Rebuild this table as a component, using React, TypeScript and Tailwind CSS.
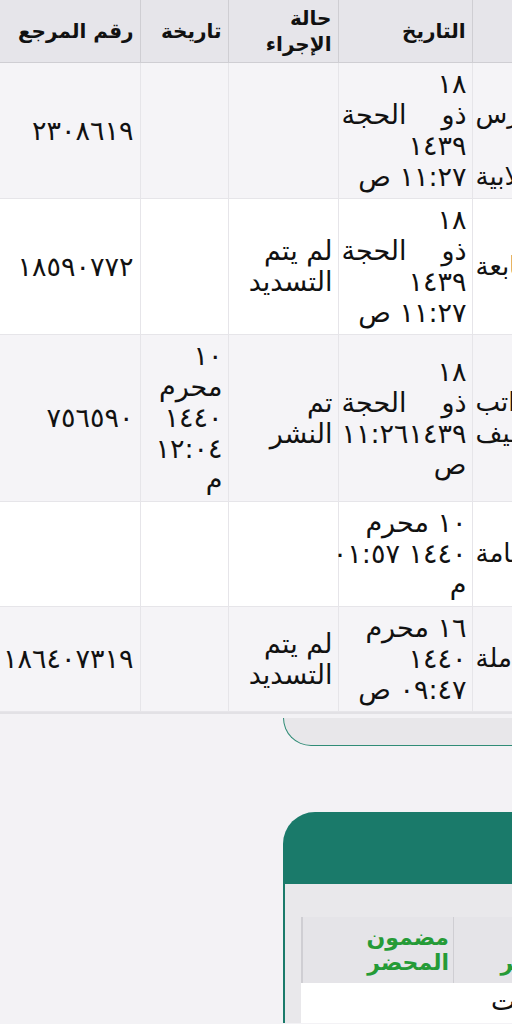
import React from 'react'

// one row of the transactions table; every cell is a list of display lines
type Row = {
  bg: string
  ref: string
  issued: string[]
  status: string[]
  date: string[]
  side: [string, boolean][]
}

const rows: Row[] = [
  {
    bg: 'bg-[#f5f4f7]',
    ref: '٢٣٠٨٦١٩',
    issued: [],
    status: [],
    date: ['١٨', 'ذو|الحجة', '١٤٣٩', '١١:٢٧ ص'],
    side: [['إدارة', false], ['شؤون المدارس', true], ['الأهلية', false], ['والخدمات الطلابية', true]],
  },
  {
    bg: 'bg-white',
    ref: '١٨٥٩٠٧٧٢',
    issued: [],
    status: ['لم يتم', 'التسديد'],
    date: ['١٨', 'ذو|الحجة', '١٤٣٩', '١١:٢٧ ص'],
    side: [['إدارة المتابعة', true]],
  },
  {
    bg: 'bg-[#f5f4f7]',
    ref: '٧٥٦٥٩٠',
    issued: ['١٠', 'محرم', '١٤٤٠', '١٢:٠٤', 'م'],
    status: ['تم', 'النشر'],
    date: ['١٨', 'ذو|الحجة', '١٤٣٩\u200F١١:٢٦', 'ص'],
    side: [['قسم الرواتب', true], ['وشؤون التوظيف', true]],
  },
  {
    bg: 'bg-white',
    ref: '',
    issued: [],
    status: [],
    date: ['١٠ محرم', '١٤٤٠ ٠١:٥٧', 'م'],
    side: [['إدارة الخدمات العامة', true]],
  },
  {
    bg: 'bg-[#f5f4f7]',
    ref: '١٨٦٤٠٧٣١٩',
    issued: [],
    status: ['لم يتم', 'التسديد'],
    date: ['١٦ محرم', '١٤٤٠', '٠٩:٤٧ ص'],
    side: [['إدارة الجودة الشاملة', true]],
  },
]

const Lines = ({ lines }: { lines: string[] }) => (
  <div className="flex flex-col">
    {lines.map((l, i) =>
      l.includes('|') ? (
        <div key={i} className="flex justify-between whitespace-nowrap">
          {l.split('|').map((w) => (
            <span key={w}>{w}</span>
          ))}
        </div>
      ) : (
        <div key={i} className="whitespace-nowrap">{l}</div>
      )
    )}
  </div>
)

const cell = 'border-b border-l border-[#e6e5e9] py-[5.5px] pr-[5px] pl-[3px] align-middle text-right'

export default function App() {
  return (
    <div className="h-[1024px] w-full overflow-hidden bg-[#f3f2f5] font-['DejaVu_Sans',sans-serif] text-[#111]">
      {/* transactions table, scrolled so only its left part shows */}
      <div className="w-full overflow-hidden">
        <table dir="rtl" className="w-[762px] table-fixed border-collapse">
          <colgroup>
            <col className="w-[290px]" />
            <col className="w-[134px]" />
            <col className="w-[110px]" />
            <col className="w-[88px]" />
            <col className="w-[140px]" />
          </colgroup>
          <thead>
            <tr className="h-[62px] bg-[#e6e5ea] text-[20px] font-bold leading-[26px]">
              <th className="border-b border-l border-[#cfced3] pr-[6px] text-right align-middle">الجهة</th>
              <th className="border-b border-l border-[#cfced3] pr-[6px] text-right align-middle">التاريخ</th>
              <th className="border-b border-l border-[#cfced3] pr-[6px] text-right align-middle">
                حالة
                <br />
                الإجراء
              </th>
              <th className="border-b border-l border-[#cfced3] pr-[6px] text-right align-middle">تاريخة</th>
              <th className="border-b border-[#cfced3] pr-[6px] text-right align-middle">رقم المرجع</th>
            </tr>
          </thead>
          <tbody className="text-[27px] leading-[31px]">
            {rows.map((r, i) => (
              <tr key={i} className={r.bg}>
                <td className={cell}>
                  <div className="flex flex-col text-[26px]">
                    {r.side.map(([t, far], j) => (
                      <div key={j} className={`whitespace-nowrap ${far ? 'text-left' : 'text-right'}`}>{t}</div>
                    ))}
                  </div>
                </td>
                <td className={cell}>
                  <Lines lines={r.date} />
                </td>
                <td className={cell}>
                  <Lines lines={r.status} />
                </td>
                <td className={cell}>
                  <Lines lines={r.issued} />
                </td>
                <td className="border-b border-[#e6e5e9] py-[5.5px] pr-[6px] text-right align-middle">{r.ref}</td>
              </tr>
            ))}
          </tbody>
        </table>
      </div>
      <div className="h-[2px] bg-[#e2e1e5]" />

      {/* bottom of the panel holding the table */}
      <div className="ml-[283px] mt-[4px] h-[28px] rounded-bl-[28px] border-b-[1.5px] border-l-[1.5px] border-[#2f8c76] bg-[#e8e7ea]" />

      {/* next card */}
      <div className="ml-[283px] mt-[66px] h-[72px] rounded-tl-[32px] bg-[#1a7a6a]" />
      <div className="ml-[283px] border-l-2 border-[#1a7a6a] bg-[#e9e8eb] pl-[16px] pt-[33px]">
        <div dir="rtl" className="w-[400px]">
          <div className="flex h-[66px] bg-[#e5e4e8] text-[22px] font-bold leading-[25px] text-[#259b37]">
            <div className="flex w-[122px] items-center border-l border-[#cfced3] pr-[6px]">
              <div>
                عدد
                <br />
                العناصر
              </div>
            </div>
            <div className="flex w-[126px] items-center border-l border-[#cfced3] pr-[6px]">
              <div>
                تاريخ
                <br />
                العنصر
              </div>
            </div>
            <div className="flex w-[152px] items-center border-l-2 border-[#cfced3] pr-[4px]">
              <div>
                مضمون
                <br />
                المحضر
              </div>
            </div>
          </div>
          <div className="flex h-[40px] bg-white text-[26px] leading-[36px]">
            <div className="w-[122px]" />
            <div className="w-[126px] pl-[38px] text-left">ثابت</div>
            <div className="w-[152px]" />
          </div>
        </div>
      </div>
    </div>
  )
}
